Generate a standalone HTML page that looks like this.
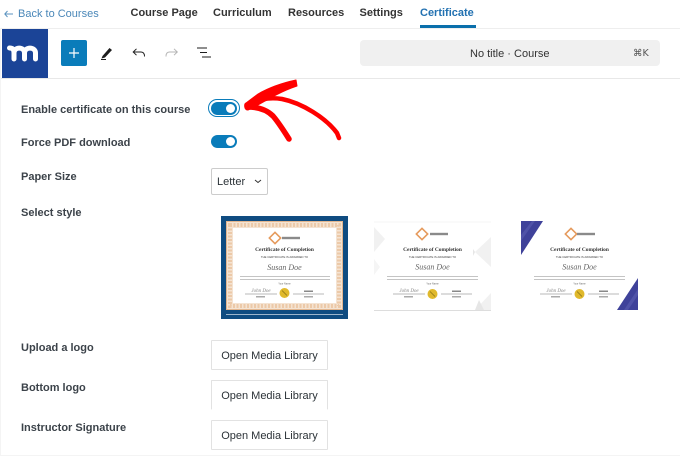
<!DOCTYPE html>
<html><head><meta charset="utf-8">
<style>
html,body{margin:0;padding:0;background:#fff}
#p{position:relative;width:680px;height:456px;overflow:hidden;background:#fff;font-family:"Liberation Sans",sans-serif}
.a{position:absolute;white-space:nowrap}
.n{top:6px;font-size:11px;font-weight:bold;color:#333;line-height:15px}
.l{left:21px;font-size:11px;font-weight:bold;color:#3c434a;line-height:14px}
.b{left:211px;width:115px;height:28px;border:1px solid #e2e2e2;border-radius:1px;background:#fff;font-size:11px;line-height:30px;text-align:center;color:#2c3338}
.t{width:26px;height:13px;border-radius:7px;background:#0a7cba;left:211px}
.t:after{content:"";position:absolute;right:2px;top:2px;width:9px;height:9px;border-radius:50%;background:#fff}
svg{position:absolute;overflow:visible}
</style></head><body><div id="p">
<div class="a" style="left:0;top:0;width:680px;height:28px;border-bottom:1px solid #eee"></div>
<div class="a" style="left:0;top:78px;width:680px;height:1px;background:#e8e8e8"></div>
<svg style="left:4px;top:10px" width="10" height="8" fill="none" stroke="#5b93c0" stroke-width="1"><path d="M3.500 1L.8 4l2.700 3M1 4h8"/></svg>
<div class="a" style="left:18px;top:7px;font-size:11px;line-height:15px;color:#4a87b8">Back to Courses</div>
<div class="a n" style="left:130.5px">Course Page</div>
<div class="a n" style="left:213px">Curriculum</div>
<div class="a n" style="left:288px">Resources</div>
<div class="a n" style="left:359.5px">Settings</div>
<div class="a n" style="left:420px;color:#2271b1">Certificate</div>
<div class="a" style="left:420px;top:25px;width:56px;height:3px;background:#0a6fab"></div>

<div class="a" style="left:2px;top:29px;width:46px;height:49px;background:#1b4497"></div>
<svg style="left:2px;top:29px" width="46" height="49" viewBox="0 0 46 49"><path d="M7.500 19c3 0 4.500 1.500 4.500 5V30M12 24c0-6.500 10.500-6.500 10.500 0v6M22.500 24c0-6.500 11-6.500 11 0v6" fill="none" stroke="#fff" stroke-width="5" stroke-linecap="round"/></svg>
<div class="a" style="left:61px;top:40px;width:26px;height:26px;border-radius:2px;background:#0a7cba"></div>
<svg style="left:61px;top:40px" width="26" height="26"><path d="M13 8v10M8 13h10" stroke="#fff" stroke-width="1.200"/></svg>
<svg style="left:100px;top:46px" width="14" height="15"><path d="M2.500 10l7-8 2.500 2-7 7.500-3.500 1z" fill="#1e1e1e"/><path d="M1 13.500h5" stroke="#1e1e1e" stroke-width="1"/></svg>
<svg style="left:132px;top:48px" width="14" height="10" fill="none" stroke="#1e1e1e" stroke-width="1"><path d="M4.500 .8L1.200 4l3.300 3.200M1.500 4h7.500c2.500 0 3.500 1.500 3.500 4.500"/></svg>
<svg style="left:164.500px;top:48px" width="14" height="10" fill="none" stroke="#b5b5b5" stroke-width="1"><path d="M9 .8L12.300 4 9 7.200M12 4H4.500C2 4 1 5.500 1 8.500"/></svg>
<svg style="left:197px;top:47px" width="15" height="11" stroke="#1e1e1e" stroke-width="1"><path d="M0 1h10M3 5.500h7M5 10h9"/></svg>

<div class="a" style="left:360px;top:40px;width:300px;height:26px;border-radius:4px;background:#f0f0f0"></div>
<div class="a" style="left:470px;top:47px;font-size:11px;line-height:14px;color:#333">No title · Course</div>
<div class="a" style="left:633px;top:47px;font-size:9.500px;line-height:14px;color:#555;font-family:'DejaVu Sans',sans-serif">⌘K</div>

<div class="a l" style="top:103px">Enable certificate on this course</div>
<div class="a" style="left:208px;top:99px;width:30px;height:16px;border:1px solid #0a7cba;border-radius:9px;background:#fff"></div>
<div class="a t" style="top:102px"></div>
<div class="a l" style="top:136px">Force PDF download</div>
<div class="a t" style="top:135px"></div>
<div class="a l" style="top:170px">Paper Size</div>
<div class="a" style="left:211px;top:168px;width:55px;height:25px;border:1px solid #ccc;border-radius:2px;font-size:11px;line-height:27px;color:#2c3338;text-indent:5px">Letter</div>
<svg style="left:254px;top:179px" width="8" height="5"><path d="M1 1l3 2.500L7 1" fill="none" stroke="#333" stroke-width="1"/></svg>
<div class="a l" style="top:206px">Select style</div>

<svg style="left:221px;top:216px" width="127" height="103" viewBox="0 0 127 103" font-family="Liberation Serif,serif" text-anchor="middle">
<rect width="127" height="103" fill="#0f4c81"/>
<rect x="5" y="5" width="117" height="89" fill="#f4e3d2"/>
<rect x="5.500" y="5.500" width="116" height="88" fill="none" stroke="#e2b68f" stroke-width="1"/>
<rect x="9" y="9" width="109" height="81" fill="none" stroke="#ecc9a8" stroke-width="4" stroke-dasharray="2 1.500"/>
<rect x="12" y="12" width="103" height="75" fill="#fff"/>
<rect x="5" y="98" width="117" height="1" fill="#9db6cc"/>
<rect x="50" y="18" width="8" height="8" fill="none" stroke="#e59a5c" stroke-width="1.600" transform="rotate(45 54 22)"/>
<rect x="61" y="20.800" width="18" height="2.400" fill="#8a8a8a"/>
<text x="63.500" y="35" font-size="5.400" font-weight="bold" fill="#333">Certificate of Completion</text>
<text x="63.500" y="42" font-size="2.800" fill="#444" font-family="Liberation Sans,sans-serif">THE CERTIFICATE IS AWARDED TO</text>
<text x="63.500" y="54" font-size="8" font-style="italic" fill="#666">Susan Doe</text>
<path d="M19 60.500h90M19 63.500h90" stroke="#c4c4c4" stroke-width="1"/>
<text x="63.500" y="68.500" font-size="2.500" fill="#666" font-family="Liberation Sans,sans-serif">Your Name</text>
<path d="M24 78h32M72 78h31" stroke="#777" stroke-width=".6"/>
<text x="40" y="76" font-size="5" font-style="italic" fill="#888">John Doe</text>
<rect x="35" y="80" width="9" height="1.500" fill="#aaa"/><rect x="83" y="80" width="9" height="1.500" fill="#aaa"/>
<rect x="83" y="74.500" width="9" height="1.500" fill="#888"/>
<circle cx="63.500" cy="77" r="5" fill="#e0b92c"/><path d="M61 74.500l5 5" stroke="#8d7416" stroke-width=".8"/>
</svg>

<svg style="left:374px;top:221px" width="117" height="90" viewBox="0 0 117 90" font-family="Liberation Serif,serif" text-anchor="middle">
<rect width="117" height="90" fill="#fff"/>
<path d="M0 1h117" stroke="#f4f4f4"/>
<path d="M0 6l11 12L0 31zM117 16v30l-16-15zM117 72v17h-16z" fill="#f1f1f1"/>
<path d="M0 38l6 8-6 8z" fill="#f5f5f5"/>
<path d="M101 31l-2-3v7zM101 89l4-10 5 10z" fill="#e6e6e6"/>
<path d="M0 89.500h117" stroke="#ddd"/>
<rect x="44" y="9" width="8" height="8" fill="none" stroke="#e59a5c" stroke-width="1.600" transform="rotate(45 48 13)"/>
<rect x="56" y="11.800" width="18" height="2.400" fill="#8a8a8a"/>
<text x="58.500" y="30" font-size="5.400" font-weight="bold" fill="#333">Certificate of Completion</text>
<text x="58.500" y="37" font-size="2.800" fill="#444" font-family="Liberation Sans,sans-serif">THE CERTIFICATE IS AWARDED TO</text>
<text x="58.500" y="48.500" font-size="8" font-style="italic" fill="#666">Susan Doe</text>
<path d="M13 55.500h91M13 58.500h91" stroke="#c4c4c4" stroke-width="1"/>
<text x="58.500" y="63.500" font-size="2.500" fill="#666" font-family="Liberation Sans,sans-serif">Your Name</text>
<path d="M19 73h32M67 73h31" stroke="#777" stroke-width=".6"/>
<text x="35" y="71" font-size="5" font-style="italic" fill="#888">John Doe</text>
<rect x="30" y="75" width="9" height="1.500" fill="#aaa"/><rect x="78" y="75" width="9" height="1.500" fill="#aaa"/>
<rect x="78" y="69.500" width="9" height="1.500" fill="#888"/>
<circle cx="58.500" cy="73" r="5" fill="#e0b92c"/><path d="M56 70.500l5 5" stroke="#8d7416" stroke-width=".8"/>
</svg>

<svg style="left:521px;top:221px" width="117" height="90" viewBox="0 0 117 90" font-family="Liberation Serif,serif" text-anchor="middle">
<rect width="117" height="90" fill="#fff"/>
<path d="M0 0h22L0 34z" fill="#3f429a"/><path d="M0 14L11 0h3L0 20z" fill="#5053a8"/>
<path d="M117 89H96L117 57z" fill="#3f429a"/><path d="M117 68l-14 21h4l10-15z" fill="#5053a8"/>
<rect x="46" y="9" width="8" height="8" fill="none" stroke="#e59a5c" stroke-width="1.600" transform="rotate(45 50 13)"/>
<rect x="56" y="11.800" width="18" height="2.400" fill="#8a8a8a"/>
<text x="58.500" y="30" font-size="5.400" font-weight="bold" fill="#333">Certificate of Completion</text>
<text x="58.500" y="37" font-size="2.800" fill="#444" font-family="Liberation Sans,sans-serif">THE CERTIFICATE IS AWARDED TO</text>
<text x="58.500" y="48.500" font-size="8" font-style="italic" fill="#666">Susan Doe</text>
<path d="M13 55.500h91M13 58.500h91" stroke="#c4c4c4" stroke-width="1"/>
<text x="58.500" y="63.500" font-size="2.500" fill="#666" font-family="Liberation Sans,sans-serif">Your Name</text>
<path d="M19 73h32M67 73h31" stroke="#777" stroke-width=".6"/>
<text x="35" y="71" font-size="5" font-style="italic" fill="#888">John Doe</text>
<rect x="30" y="75" width="9" height="1.500" fill="#aaa"/><rect x="78" y="75" width="9" height="1.500" fill="#aaa"/>
<rect x="78" y="69.500" width="9" height="1.500" fill="#888"/>
<circle cx="58.500" cy="73" r="5" fill="#e0b92c"/><path d="M56 70.500l5 5" stroke="#8d7416" stroke-width=".8"/>
</svg>

<div class="a l" style="top:341px">Upload a logo</div>
<div class="a b" style="top:340px">Open Media Library</div>
<div class="a l" style="top:381px">Bottom logo</div>
<div class="a b" style="top:380px;border-bottom-color:#fff">Open Media Library</div>
<div class="a l" style="top:421px">Instructor Signature</div>
<div class="a b" style="top:420px">Open Media Library</div>
<div class="a" style="left:0;top:28px;width:1px;height:428px;background:#f4f4f4"></div>
<div class="a" style="left:0;top:455px;width:680px;height:1px;background:#f4f4f4"></div>

<svg style="left:230px;top:70px" width="120" height="80" viewBox="0 0 120 80">
<path d="M66 10L67 16C52 21 40 28 28 35L18 40C14 40 14 34 16 33L28 24C40 17 52 13 66 10z" fill="#f00" stroke="#f00" stroke-width="1" stroke-linejoin="round"/>
<path d="M18 36C28 29 40 27 52 29C72 33 96 48 107 63L109 68" fill="none" stroke="#f00" stroke-width="4.500" stroke-linecap="round" stroke-linejoin="round"/>
<path d="M18 37C28 37 37 40 43 46C49 53 54 61 59 69" fill="none" stroke="#f00" stroke-width="5.500" stroke-linecap="round"/>
</svg>
</div></body></html>
